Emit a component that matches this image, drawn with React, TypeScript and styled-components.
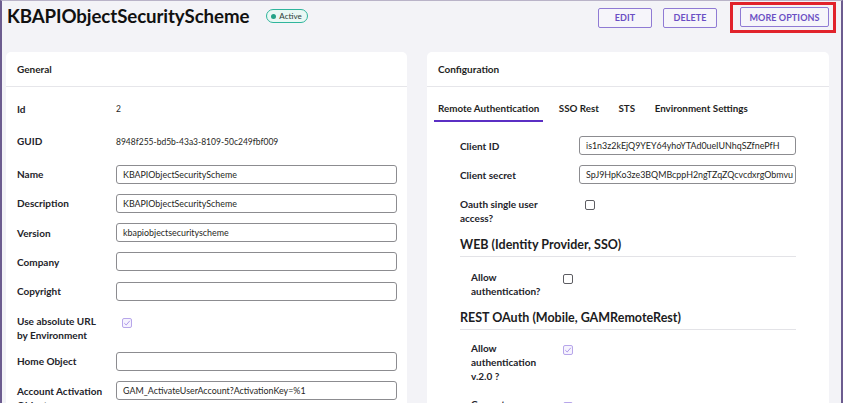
import React from 'react'
import styled, { createGlobalStyle } from 'styled-components'

const GlobalStyle = createGlobalStyle`
  html, body {
    margin: 0;
    padding: 0;
    background: #ffffff;
  }
  body {
    font-family: Lato, 'Noto Sans', sans-serif;
    color: #1f1f24;
  }
`

const Frame = styled.div`
  width: 843px;
  height: 403px;
  box-sizing: border-box;
  border-left: 2px solid #6c5c8f;
  border-right: 2px solid #6c5c8f;
  border-top: 1px solid #b9b3c8;
  background: #f3f3f7;
  overflow: hidden;
  display: flex;
  flex-direction: column;
`

const Header = styled.div`
  display: flex;
  align-items: center;
  height: 33px;
  padding: 1px 5px 0 5px;
`

const Title = styled.h1`
  margin: 0 0 3px;
  font-size: 18.7px;
  font-weight: 700;
  letter-spacing: -0.1px;
  color: #111;
`

const Badge = styled.span`
  display: inline-flex;
  align-items: center;
  gap: 3px;
  margin: 0 0 3px 17px;
  height: 12px;
  padding: 0 5px 0 4px;
  border: 1px solid #2fb59c;
  border-radius: 8px;
  background: #e9f8f4;
  font-size: 8px;
  color: #2b3a36;

  &::before {
    content: '';
    width: 5px;
    height: 5px;
    border-radius: 50%;
    background: #22a387;
  }
`

const Actions = styled.div`
  margin-left: auto;
  display: flex;
  align-items: center;
  gap: 11px;
`

const Highlight = styled.div`
  margin-left: 2px;
  padding: 2px 4px 3px 7px;
  border: 3px solid #e1222b;
`

const Button = styled.button<{ $w: number }>`
  display: block;
  width: ${p => p.$w}px;
  height: 20px;
  background: #f6f5fa;
  border: 1px solid #8f7ad4;
  border-radius: 2px;
  color: #6b4fc4;
  font-family: Lato, sans-serif;
  font-size: 9px;
  font-weight: 700;
  letter-spacing: 0.1px;
  text-transform: uppercase;
  padding: 0;
`

const Columns = styled.div`
  display: grid;
  grid-template-columns: 401px 402px;
  gap: 20px;
  padding: 19px 0 0 4px;
`

const Card = styled.section`
  background: #ffffff;
  border-radius: 5px 5px 0 0;
  height: 360px;
  overflow: hidden;
`

const CardHeader = styled.div`
  height: 34px;
  display: flex;
  align-items: center;
  padding: 0 11px;
  border-bottom: 1px solid #e6e6ea;
  font-size: 10px;
  font-weight: 700;
`

const CardBody = styled.div`
  display: flex;
  flex-direction: column;
  gap: 10.3px;
  padding: 12px 10px 0 11px;
`

const Row = styled.div<{ $label: number }>`
  display: grid;
  grid-template-columns: ${p => p.$label}px 1fr;
  align-items: start;
`

const Label = styled.div<{ $max?: number }>`
  font-size: 10px;
  font-weight: 700;
  line-height: 14px;
  padding-top: 2.5px;
  max-width: ${p => (p.$max ? `${p.$max}px` : 'none')};
  color: #23232a;
`

const TextValue = styled.div`
  font-size: 8.5px;
  line-height: 20px;
  height: 22.5px;
  color: #1f1f24;
`

const Input = styled.div`
  height: 19px;
  box-sizing: border-box;
  border: 1px solid #8c8c90;
  border-radius: 3px;
  padding: 0 6px;
  font-size: 8.9px;
  line-height: 17px;
  white-space: nowrap;
  overflow: hidden;
  color: #1f1f24;
`

const Check = styled.span<{ $checked?: boolean }>`
  display: inline-flex;
  align-items: center;
  justify-content: center;
  margin: 4px 0 0 6px;
  width: 10px;
  height: 10px;
  box-sizing: border-box;
  border: 1px solid ${p => (p.$checked ? '#b7a6ea' : '#5d5d62')};
  border-radius: 2px;
  background: ${p => (p.$checked ? '#f6f3fe' : '#fff')};
`

const Tabs = styled.div`
  display: flex;
  gap: 11.5px;
  padding: 8px 0 0 7px;
`

const Tab = styled.div<{ $active?: boolean }>`
  padding: 0 4px;
  height: 27px;
  line-height: 27px;
  box-sizing: border-box;
  font-size: 9.8px;
  font-weight: 700;
  border-bottom: 2px solid ${p => (p.$active ? '#5b2fc4' : 'transparent')};
`

const TabBody = styled.div`
  display: flex;
  flex-direction: column;
  gap: 10px;
  padding: 14px 33px 0 33px;
`

const Section = styled.div<{ $gap: number }>`
  display: flex;
  flex-direction: column;
  gap: ${p => p.$gap}px;
`

const SectionTitle = styled.h3`
  margin: 1px 0 0;
  padding-bottom: 2px;
  border-bottom: 1px solid #e3e3e7;
  font-size: 12.5px;
  font-weight: 700;
  line-height: 18px;
  color: #1c1c22;
`

const Nested = styled.div`
  display: flex;
  flex-direction: column;
  gap: 12px;
  padding: 1px 0 0 11px;
`

const CheckBox = ({ checked }: { checked?: boolean }) => (
  <div>
    <Check $checked={checked}>
      {checked && (
        <svg width='8' height='8' viewBox='0 0 8 8'>
          <path d='M1.3 4.2 L3.2 6 L6.8 1.8' fill='none' stroke='#a58ee6' strokeWidth='0.9' />
        </svg>
      )}
    </Check>
  </div>
)

const general: Array<[string, string | null, 'text' | 'input' | 'check']> = [
  ['Id', '2', 'text'],
  ['GUID', '8948f255-bd5b-43a3-8109-50c249fbf009', 'text'],
  ['Name', 'KBAPIObjectSecurityScheme', 'input'],
  ['Description', 'KBAPIObjectSecurityScheme', 'input'],
  ['Version', 'kbapiobjectsecurityscheme', 'input'],
  ['Company', '', 'input'],
  ['Copyright', '', 'input'],
  ['Use absolute URL by Environment', null, 'check'],
  ['Home Object', '', 'input'],
  ['Account Activation Object', 'GAM_ActivateUserAccount?ActivationKey=%1', 'input'],
]

export default function App() {
  return (
    <>
      <GlobalStyle />
      <Frame>
        <Header>
          <Title>KBAPIObjectSecurityScheme</Title>
          <Badge>Active</Badge>
          <Actions>
            <Button $w={54}>Edit</Button>
            <Button $w={54}>Delete</Button>
            <Highlight>
              <Button $w={89}>More options</Button>
            </Highlight>
          </Actions>
        </Header>
        <Columns>
          <Card>
            <CardHeader>General</CardHeader>
            <CardBody>
              {general.map(([label, value, kind]) => (
                <Row key={label} $label={99}>
                  <Label $max={kind === 'check' ? 86 : undefined}>{label}</Label>
                  {kind === 'text' && <TextValue>{value}</TextValue>}
                  {kind === 'input' && <Input>{value}</Input>}
                  {kind === 'check' && <CheckBox checked />}
                </Row>
              ))}
            </CardBody>
          </Card>
          <Card>
            <CardHeader>Configuration</CardHeader>
            <Tabs>
              <Tab $active>Remote Authentication</Tab>
              <Tab>SSO Rest</Tab>
              <Tab>STS</Tab>
              <Tab>Environment Settings</Tab>
            </Tabs>
            <TabBody>
              <Row $label={119}>
                <Label>Client ID</Label>
                <Input>is1n3z2kEjQ9YEY64yhoYTAd0ueIUNhqSZfnePfH</Input>
              </Row>
              <Row $label={119}>
                <Label>Client secret</Label>
                <Input>SpJ9HpKo3ze3BQMBcppH2ngTZqZQcvcdxrgObmvu</Input>
              </Row>
              <Row $label={119}>
                <Label $max={90}>Oauth single user access?</Label>
                <CheckBox />
              </Row>
              <Section $gap={10}>
                <SectionTitle>WEB (Identity Provider, SSO)</SectionTitle>
                <Nested>
                  <Row $label={86}>
                    <Label $max={80}>Allow authentication?</Label>
                    <CheckBox />
                  </Row>
                </Nested>
              </Section>
              <Section $gap={7}>
                <SectionTitle>REST OAuth (Mobile, GAMRemoteRest)</SectionTitle>
                <Nested>
                  <Row $label={86}>
                    <Label $max={70}>Allow authentication v.2.0 ?</Label>
                    <CheckBox checked />
                  </Row>
                  <Row $label={86}>
                    <Label $max={70}>Can get user additional data?</Label>
                    <CheckBox checked />
                  </Row>
                </Nested>
              </Section>
            </TabBody>
          </Card>
        </Columns>
      </Frame>
    </>
  )
}
